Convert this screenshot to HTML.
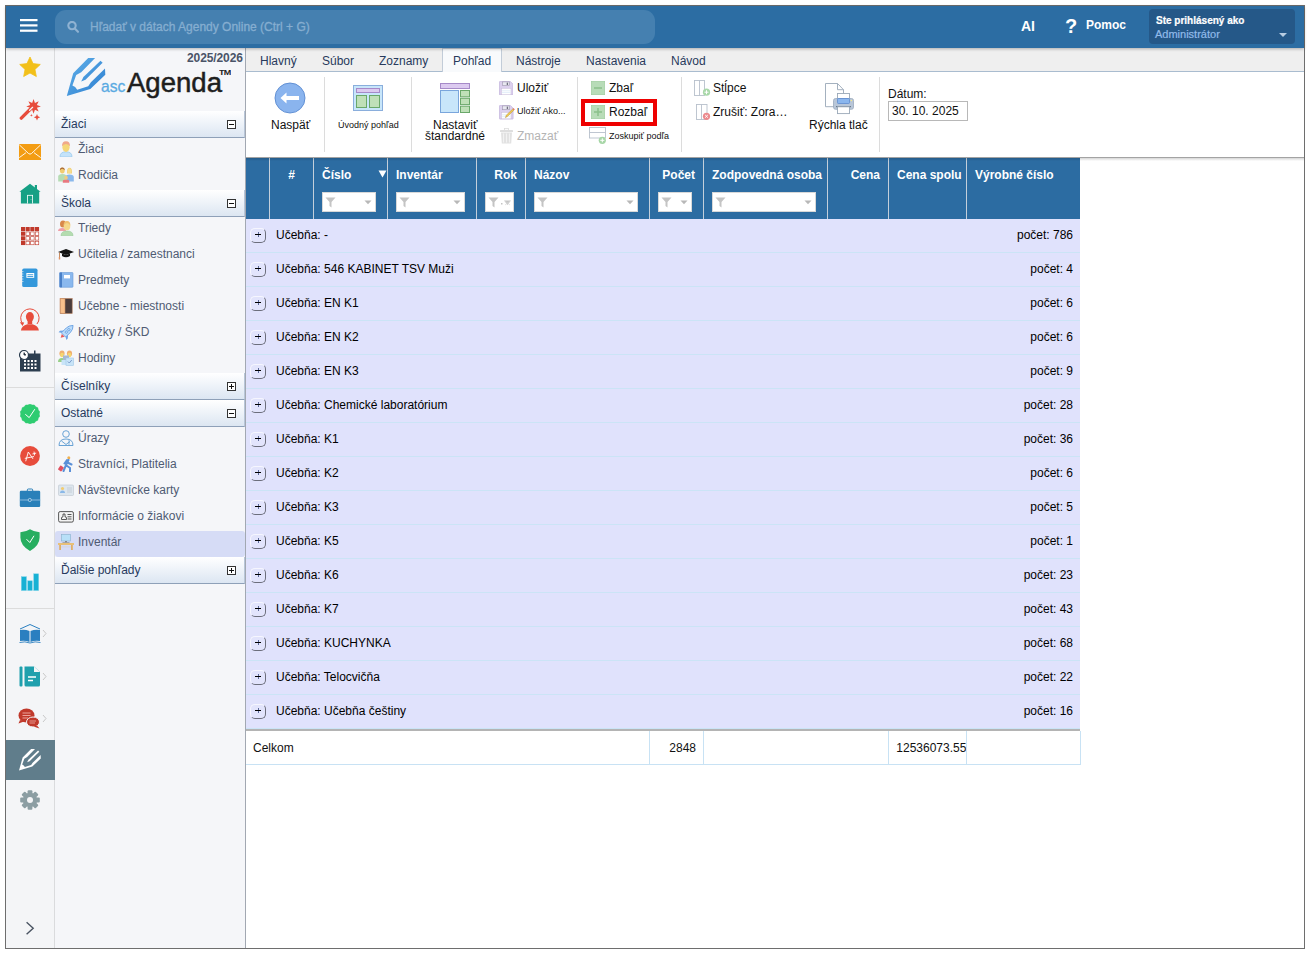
<!DOCTYPE html>
<html><head><meta charset="utf-8">
<style>
*{box-sizing:border-box;margin:0;padding:0}
html,body{width:1310px;height:954px;background:#fff;overflow:hidden;font-family:"Liberation Sans",sans-serif;font-size:12px;color:#222;position:relative}
.a{position:absolute;white-space:nowrap}
.hz{z-index:6}
#frame{position:absolute;left:5px;top:5px;width:1300px;height:944px;border:1px solid #6e6e6e}
#hdr{position:absolute;left:6px;top:6px;width:1298px;height:42px;background:#2c6da3;box-shadow:0 1px 3px rgba(0,0,0,.28);z-index:5}
#search{position:absolute;left:55px;top:10px;width:600px;height:34px;border-radius:11px;background:#4580b0;z-index:6}
#leftbar{position:absolute;left:6px;top:48px;width:49px;height:900px;background:#f4f5f7;border-right:1px solid #dadbdd}
#nav{position:absolute;left:55px;top:48px;width:191px;height:900px;background:#f5f6f9;border-right:1px solid #a2a8b2}
.sh{position:absolute;left:55px;width:190px;height:27px;background:linear-gradient(#ffffff,#dce6f2);border-bottom:1px solid #8ea0b8;border-right:1px solid #b8c6d8}
.sh span{position:absolute;left:6px;top:6px;font-size:12px;color:#273a5e}
.sh i{position:absolute;left:172px;top:9px;width:9px;height:9px;border:1px solid #333;background:#fff}
.sh i:before{content:"";position:absolute;left:1px;top:3px;width:5px;height:1px;background:#111}
.sh i.p:after{content:"";position:absolute;left:3px;top:1px;width:1px;height:5px;background:#111}
.ni{position:absolute;left:55px;width:190px;height:26px}
.ni span{position:absolute;left:23px;top:4px;font-size:12px;color:#4f5b73}
.ni svg{position:absolute;left:3px;top:3px}
.lb{position:absolute;left:19px}
#tabs{position:absolute;left:246px;top:48px;width:1058px;height:24px;background:#efefef;border-bottom:1px solid #a9bccf}
.tab{position:absolute;top:6px;font-size:12px;color:#283a5c}
#ribbon{position:absolute;left:246px;top:72px;width:1058px;height:86px;background:#fff}
.sep{position:absolute;top:77px;width:1px;height:75px;background:#dcdcdc}
#grid{position:absolute;left:246px;top:158px}
.gh{position:absolute;top:158px;height:61px;background:#2c6da2}
.gs{position:absolute;top:158px;width:1px;height:61px;background:#c9d3dd}
.ght{position:absolute;top:168px;font-size:12px;font-weight:bold;color:#fff}
.flt{position:absolute;top:192px;height:20px;background:#fff;border:1px solid #d8d8d8}
.flt svg.f{position:absolute;left:2px;top:4px}
.flt svg.d{position:absolute;right:3px;top:7px}
.row{position:absolute;left:246px;width:834px;height:34px;background:#e0e2fc;border-bottom:1px solid #cbe4f6}
.row .pb{position:absolute;left:4px;top:9px;width:16px;height:15px;border-radius:5px;background:#e2e4fc;border:1px solid #f6f6fe;border-right-color:#6c6e7c;border-bottom-color:#6c6e7c}
.row .pb:before{content:"";position:absolute;left:4px;top:5px;width:6px;height:1px;background:#000;z-index:1}
.row .pb:after{content:"";position:absolute;left:6.5px;top:3px;width:1px;height:5px;background:#5a6898}
.row span{position:absolute;left:30px;top:9px;font-size:12px;color:#000}
.row b{position:absolute;right:7px;top:9px;font-size:12px;font-weight:normal;color:#000}
</style></head><body>
<div id="frame"></div>
<div id="hdr"></div>
<svg class="a hz" style="left:19.5px;top:19px" width="18" height="14" viewBox="0 0 18 14"><rect x="0" y="0" width="17.5" height="2.2" fill="#fff"/><rect x="0" y="5.3" width="17.5" height="2.2" fill="#fff"/><rect x="0" y="10.6" width="17.5" height="2.2" fill="#fff"/></svg>
<div id="search"></div>
<svg class="a hz" style="left:67px;top:21px" width="13" height="13" viewBox="0 0 13 13"><circle cx="5" cy="4.6" r="3.7" fill="none" stroke="#8fb2d2" stroke-width="2.1"/><line x1="7.8" y1="7.5" x2="11" y2="10.8" stroke="#8fb2d2" stroke-width="2.1" stroke-linecap="round"/></svg>
<div class="a hz" style="left:90px;top:20px;font-size:12px;color:#86aed0;-webkit-text-stroke:0.3px #86aed0">Hľadať v dátach Agendy Online (Ctrl + G)</div>
<div class="a hz" style="left:1021px;top:18px;font-size:14px;font-weight:bold;color:#fff">AI</div>
<div class="a hz" style="left:1065px;top:15px;font-size:20px;font-weight:bold;color:#fff">?</div>
<div class="a hz" style="left:1086px;top:18px;font-size:12px;font-weight:bold;color:#fff">Pomoc</div>
<div class="a hz" style="left:1149px;top:9px;width:146px;height:35px;border-radius:4px;background:#255888"></div>
<div class="a hz" style="left:1156px;top:14.5px;font-size:10px;font-weight:bold;color:#fff;-webkit-text-stroke:0.2px #fff">Ste prihlásený ako</div>
<div class="a hz" style="left:1155px;top:28px;font-size:11px;color:#92bbea;-webkit-text-stroke:0.2px #92bbea">Administrátor</div>
<svg class="a hz" style="left:1279px;top:33px" width="8" height="5"><path d="M0 0H8L4 4Z" fill="#b8cde2"/></svg>

<div id="leftbar"></div>
<div id="nav"></div>


<!-- LEFT BAR ICONS -->
<svg class="a" style="left:19px;top:56px" width="22" height="22" viewBox="0 0 22 22"><path d="M11.00 1.00 L14.06 7.59 L21.27 8.46 L15.95 13.41 L17.35 20.54 L11.00 17.00 L4.65 20.54 L6.05 13.41 L0.73 8.46 L7.94 7.59 Z" fill="#f2c01a" stroke="#f2c01a" stroke-width="0.8" stroke-linejoin="round"/></svg>
<svg class="a" style="left:19px;top:99px" width="24" height="24" viewBox="0 0 24 24"><path d="M14.55 0.10 L15.93 4.07 L19.71 2.24 L17.88 6.02 L21.85 7.40 L17.88 8.78 L19.71 12.56 L15.93 10.73 L14.55 14.70 L13.17 10.73 L9.39 12.56 L11.22 8.78 L7.25 7.40 L11.22 6.02 L9.39 2.24 L13.17 4.07Z" fill="#e74c3c"/><path d="M2.3 19.2 L12.5 9" stroke="#e74c3c" stroke-width="3.3" stroke-linecap="round"/><path d="M10.6 11.3 L13.6 8.3" stroke="#f4f5f7" stroke-width="1.25" stroke-linecap="round"/><path d="M18.00 15.00 L18.95 17.25 L21.20 18.20 L18.95 19.15 L18.00 21.40 L17.05 19.15 L14.80 18.20 L17.05 17.25Z" fill="#e74c3c"/><path d="M12.40 14.80 L12.75 15.95 L13.90 16.30 L12.75 16.65 L12.40 17.80 L12.05 16.65 L10.90 16.30 L12.05 15.95Z" fill="#e74c3c"/></svg>
<svg class="a" style="left:18px;top:143px" width="24" height="18" viewBox="0 0 24 18"><rect x="1" y="1" width="22" height="16" fill="#f39c12"/><path d="M1.3 1.8 L10.5 10.5 Q12 11.8 13.5 10.5 L22.7 1.8" stroke="#fff" stroke-width="0.9" fill="none"/><path d="M1.3 14.6 L8 9.7 M22.7 14.6 L16 9.7" stroke="#fff" stroke-width="0.9"/></svg>
<svg class="a" style="left:19px;top:183px" width="22" height="21" viewBox="0 0 22 21"><path d="M11 0.8 L21.6 8.8 L20.2 8.8 L20.2 20.5 L1.9 20.5 L1.9 8.8 L0.4 8.8 Z" fill="#16a085"/><rect x="15.8" y="2" width="2.2" height="5" fill="#16a085"/><rect x="8.1" y="11.9" width="5.9" height="8.6" fill="#fff"/><rect x="8.9" y="12.7" width="4.3" height="7.8" fill="#16a085"/><circle cx="12" cy="16.5" r="0.4" fill="#c8ece4"/></svg>
<svg class="a" style="left:20.5px;top:226.5px" width="19" height="19" viewBox="0 0 19 19"><rect x="0.00" y="0.00" width="4.1" height="4.1" fill="#c0392b"/><rect x="4.65" y="0.00" width="4.1" height="4.1" fill="#c0392b"/><rect x="9.30" y="0.00" width="4.1" height="4.1" fill="#c0392b"/><rect x="13.95" y="0.00" width="4.1" height="4.1" fill="#c0392b"/><rect x="0.00" y="4.65" width="4.1" height="4.1" fill="#c0392b"/><rect x="4.65" y="4.65" width="4.1" height="4.1" fill="#c0392b"/><rect x="5.25" y="5.25" width="2.9" height="2.9" fill="#fff"/><rect x="9.30" y="4.65" width="4.1" height="4.1" fill="#c0392b"/><rect x="9.90" y="5.25" width="2.9" height="2.9" fill="#fff"/><rect x="13.95" y="4.65" width="4.1" height="4.1" fill="#c0392b"/><rect x="14.55" y="5.25" width="2.9" height="2.9" fill="#fff"/><rect x="0.00" y="9.30" width="4.1" height="4.1" fill="#c0392b"/><rect x="4.65" y="9.30" width="4.1" height="4.1" fill="#c0392b"/><rect x="5.25" y="9.90" width="2.9" height="2.9" fill="#fff"/><rect x="9.30" y="9.30" width="4.1" height="4.1" fill="#c0392b"/><rect x="9.90" y="9.90" width="2.9" height="2.9" fill="#fff"/><rect x="13.95" y="9.30" width="4.1" height="4.1" fill="#c0392b"/><rect x="14.55" y="9.90" width="2.9" height="2.9" fill="#fff"/><rect x="0.00" y="13.95" width="4.1" height="4.1" fill="#c0392b"/><rect x="4.65" y="13.95" width="4.1" height="4.1" fill="#c0392b"/><rect x="5.25" y="14.55" width="2.9" height="2.9" fill="#fff"/><rect x="9.30" y="13.95" width="4.1" height="4.1" fill="#c0392b"/><rect x="9.90" y="14.55" width="2.9" height="2.9" fill="#fff"/><rect x="13.95" y="13.95" width="4.1" height="4.1" fill="#c0392b"/><rect x="14.55" y="14.55" width="2.9" height="2.9" fill="#fff"/></svg>
<svg class="a" style="left:21px;top:268px" width="18" height="20" viewBox="0 0 18 20"><rect x="1.2" y="0.6" width="15.3" height="18.4" rx="1.6" fill="#3498db"/><path d="M0.5 3.5H2.5M0.5 6H2.5M0.5 8.5H2.5M0.5 11H2.5M0.5 13.5H2.5" stroke="#f4f5f7" stroke-width="0.6"/><rect x="5.4" y="5" width="7.8" height="4.8" fill="#fff"/><rect x="6.4" y="6.3" width="5.8" height="0.9" fill="#3498db"/><rect x="6.4" y="8" width="5.8" height="0.9" fill="#3498db"/></svg>
<svg class="a" style="left:19px;top:308px" width="22" height="24" viewBox="0 0 22 24"><path d="M3.85 16 A9.2 9.2 0 1 1 17.95 16" stroke="#e74c3c" stroke-width="1" fill="none"/><path d="M0.8 14.2 L5.2 14.6 L3.6 18Z" fill="#e74c3c"/><ellipse cx="10.9" cy="8.8" rx="4" ry="4.8" fill="#e74c3c"/><rect x="8.6" y="12" width="4.6" height="4" fill="#e74c3c"/><path d="M1.9 22.6 Q2.6 17.6 8.3 16.3 L13.5 16.3 Q19.2 17.6 19.9 22.6 Z" fill="#e74c3c"/></svg>
<svg class="a" style="left:19px;top:350px" width="22" height="22" viewBox="0 0 22 22"><rect x="1" y="3.5" width="20.5" height="18" fill="#2c3e50"/><g fill="#fff"><rect x="5" y="10" width="2" height="2"/><rect x="8.5" y="10" width="2" height="2"/><rect x="12" y="10" width="2" height="2"/><rect x="15.5" y="10" width="2" height="2"/><rect x="5" y="13.5" width="2" height="2"/><rect x="8.5" y="13.5" width="2" height="2"/><rect x="12" y="13.5" width="2" height="2"/><rect x="15.5" y="13.5" width="2" height="2"/><rect x="5" y="17" width="2" height="2"/><rect x="8.5" y="17" width="2" height="2"/><rect x="12" y="17" width="2" height="2"/><rect x="15.5" y="17" width="2" height="2"/></g><rect x="15" y="0.5" width="1.5" height="4" fill="#2c3e50"/><circle cx="5" cy="5" r="4.5" fill="#fff" stroke="#2c3e50" stroke-width="1.2"/><path d="M5 2.5V5H7" stroke="#2c3e50" stroke-width="1"/></svg>
<div class="a" style="left:6px;top:387px;width:48px;height:1px;background:#dcdcdc"></div>
<svg class="a" style="left:20px;top:404px" width="20" height="20" viewBox="0 0 20 20"><path d="M10.00 0.00 L12.05 1.03 L14.34 0.99 L15.74 2.81 L17.82 3.77 L18.29 6.01 L19.75 7.77 L19.20 10.00 L19.75 12.23 L18.29 13.99 L17.82 16.23 L15.74 17.19 L14.34 19.01 L12.05 18.97 L10.00 20.00 L7.95 18.97 L5.66 19.01 L4.26 17.19 L2.18 16.23 L1.71 13.99 L0.25 12.23 L0.80 10.00 L0.25 7.77 L1.71 6.01 L2.18 3.77 L4.26 2.81 L5.66 0.99 L7.95 1.03Z" fill="#2ecc71" stroke="#2ecc71" stroke-width="0.5" stroke-linejoin="round"/><path d="M5.3 10.3 L9.2 13.6 L14.8 5.2" stroke="#fff" stroke-width="1" fill="none"/></svg>
<svg class="a" style="left:20px;top:446px" width="20" height="20" viewBox="0 0 20 20"><circle cx="10" cy="10" r="9.9" fill="#e74c3c"/><path d="M5.8 14.9 L8.3 6 L12.8 12.6 M5.2 12.3 L13.6 10.6 M12.8 7.9 L15.8 7.2 M14.1 6 L14.5 9" stroke="#fff" stroke-width="0.9" fill="none" stroke-linecap="round"/></svg>
<svg class="a" style="left:19px;top:488px" width="22" height="20" viewBox="0 0 22 20"><rect x="8.3" y="1" width="5.4" height="3" rx="1" fill="none" stroke="#2a80b9" stroke-width="1"/><rect x="0.8" y="2.8" width="20.4" height="16.1" rx="1.2" fill="#2a80b9"/><path d="M0.8 12H21.2" stroke="#8ab8dc" stroke-width="1"/><circle cx="10.8" cy="12" r="1.6" fill="#2a80b9" stroke="#b8d4ea" stroke-width="0.8"/></svg>
<svg class="a" style="left:20px;top:529px" width="20" height="22" viewBox="0 0 20 22"><path d="M10 0.2 Q14 2.8 19.6 3.2 L19.6 8.5 Q19.6 16.5 10 22 Q0.4 16.5 0.4 8.5 L0.4 3.2 Q6 2.8 10 0.2 Z" fill="#27ae60"/><path d="M6.5 10.2 L9.8 13.5 L14 6.8" stroke="#fff" stroke-width="1" fill="none"/></svg>
<svg class="a" style="left:21px;top:573px" width="18" height="18" viewBox="0 0 18 18"><rect x="0.3" y="3.7" width="5.2" height="13.9" fill="#17b1d4" stroke="#7fd4ea" stroke-width="0.5"/><rect x="6.7" y="7.8" width="4.6" height="9.8" fill="#17b1d4" stroke="#7fd4ea" stroke-width="0.5"/><rect x="12.7" y="0.8" width="5" height="16.8" fill="#17b1d4" stroke="#7fd4ea" stroke-width="0.5"/></svg>
<div class="a" style="left:6px;top:608px;width:48px;height:1px;background:#dcdcdc"></div>
<svg class="a" style="left:19px;top:624px" width="30" height="20" viewBox="0 0 30 20"><path d="M1 5 L11 0.5 L21 5" stroke="#2a7fc0" stroke-width="1" fill="none"/><path d="M1 6 Q6 5 10.5 7 L10.5 18 Q6 16 1 17 Z" fill="#2a7fc0"/><path d="M11.5 7 Q16 5 21 6 L21 17 Q16 16 11.5 18 Z" fill="#2a7fc0"/><path d="M0.5 18.5 Q6 17 11 19 Q16 17 21.5 18.5" stroke="#2a7fc0" stroke-width="0.9" fill="none"/><path d="M24 6 L27 9.5 L24 13" stroke="#c8c8c8" stroke-width="1" fill="none"/></svg>
<svg class="a" style="left:19px;top:666px" width="30" height="21" viewBox="0 0 30 21"><rect x="0.5" y="0.5" width="3" height="20" rx="1" fill="#1fa0ad"/><path d="M5.5 0.5 L15 0.5 L21 6 L21 19 Q21 20.5 19.5 20.5 L7 20.5 Q5.5 20.5 5.5 19 Z" fill="#1fa0ad"/><path d="M15 0.5 L15 6 L21 6 Z" fill="#f4f5f7"/><path d="M9 11H17M9 14.5H14" stroke="#fff" stroke-width="1.5"/><path d="M24 7 L27 10.5 L24 14" stroke="#c8c8c8" stroke-width="1" fill="none"/></svg>
<svg class="a" style="left:18px;top:708px" width="31" height="21" viewBox="0 0 31 21"><ellipse cx="8.5" cy="7.5" rx="8" ry="7" fill="#c0392b"/><path d="M2 12 L0.5 15.5 L6 13.5Z" fill="#c0392b"/><path d="M4.5 5H12.5M4.5 7.5H12.5M4.5 10H10" stroke="#f0b0a8" stroke-width="0.9"/><ellipse cx="15" cy="14" rx="6.5" ry="5" fill="#c0392b" stroke="#f4f5f7" stroke-width="1"/><path d="M19 17.5 L21.5 20.5 L15.5 18.5Z" fill="#c0392b"/><path d="M11.5 13H18M11.5 15H17" stroke="#f0b0a8" stroke-width="0.8"/><path d="M25 7 L28 10.5 L25 14" stroke="#c8c8c8" stroke-width="1" fill="none"/></svg>
<div class="a" style="left:6px;top:740px;width:49px;height:40px;background:#607d8b"></div>
<svg class="a" style="left:19px;top:749px" width="23" height="22" viewBox="0 0 23 22"><g transform="scale(0.566) translate(-4.8,-4)"><path d="M26.2,4 L33.1,4 L19.2,18.2 L14.2,21.1 L10.4,31.5 Q13.5,32.5 15.2,35.8 L26.2,32.3 L28.9,28.3 L43,14.4 L43.3,20.8 L28.3,35 L4.8,42 L11.2,19.2 Z" fill="#fff"/><path d="M38.5,6.7 L40.6,8.8 L23.5,25.7 L19.2,27.5 L21.4,23 Z" fill="#fff"/></g></svg>
<svg class="a" style="left:20px;top:790px" width="20" height="20" viewBox="0 0 20 20"><g fill="#8c9ea3"><circle cx="10" cy="10" r="7.2"/><rect x="7.6" y="0.2" width="4.8" height="5" rx="1" transform="rotate(0 10 10)"/><rect x="7.6" y="0.2" width="4.8" height="5" rx="1" transform="rotate(45 10 10)"/><rect x="7.6" y="0.2" width="4.8" height="5" rx="1" transform="rotate(90 10 10)"/><rect x="7.6" y="0.2" width="4.8" height="5" rx="1" transform="rotate(135 10 10)"/><rect x="7.6" y="0.2" width="4.8" height="5" rx="1" transform="rotate(180 10 10)"/><rect x="7.6" y="0.2" width="4.8" height="5" rx="1" transform="rotate(225 10 10)"/><rect x="7.6" y="0.2" width="4.8" height="5" rx="1" transform="rotate(270 10 10)"/><rect x="7.6" y="0.2" width="4.8" height="5" rx="1" transform="rotate(315 10 10)"/></g><circle cx="10" cy="10" r="3" fill="#f4f5f7"/></svg>
<svg class="a" style="left:24px;top:921px" width="12" height="15" viewBox="0 0 12 15"><path d="M2.6 1.3 L9.2 7.3 L2.6 13.3" stroke="#4a5462" stroke-width="1.4" fill="none"/></svg>
<!-- NAV -->
<div class="a" style="left:187px;top:51px;font-size:12px;font-weight:bold;color:#4a5468;letter-spacing:-0.1px">2025/2026</div>
<svg class="a" style="left:62px;top:54px" width="50" height="46" viewBox="0 0 50 46">
 <defs><linearGradient id="lg" x1="0" y1="0" x2="1" y2="1"><stop offset="0" stop-color="#62b2ea"/><stop offset="1" stop-color="#2a7ccf"/></linearGradient></defs>
 <path d="M26.2,4 L33.1,4 L19.2,18.2 L14.2,21.1 L10.4,31.5 Q13.5,32.5 15.2,35.8 L26.2,32.3 L28.9,28.3 L43,14.4 L43.3,20.8 L28.3,35 L4.8,42 L11.2,19.2 Z" fill="url(#lg)"/>
 <path d="M38.5,6.7 L40.6,8.8 L23.5,25.7 L19.2,27.5 L21.4,23 Z" fill="url(#lg)"/>
</svg>
<div class="a" style="left:101px;top:76.5px;font-size:17px;color:#5aaae2;-webkit-text-stroke:0.3px #5aaae2;transform:scaleX(0.92);transform-origin:0 0">asc</div>
<div class="a" style="left:127px;top:67.5px;font-size:27px;color:#1e1e1e;-webkit-text-stroke:0.5px #1e1e1e;transform:scaleX(1.02);transform-origin:0 0">Agenda</div>
<div class="a" style="left:219px;top:68px;font-size:9px;font-weight:bold;color:#222;letter-spacing:-0.8px;transform:scaleY(0.85);transform-origin:0 0">TM</div>

<div class="sh" style="top:111px"><span>Žiaci</span><i></i></div>
<div class="ni" style="top:138px"><svg width="16" height="16" viewBox="0 0 16 16"><path d="M2 15.8 Q2 10.8 8 10.8 Q14 10.8 14 15.8 Z" fill="#c4e3fa" stroke="#9ccaee" stroke-width="0.8"/><ellipse cx="8" cy="6.3" rx="3.6" ry="4.6" fill="#f5d778"/><path d="M4 5.5 Q3.8 0.3 8 0.3 Q12.2 0.3 12 5.5 Q11 3 8 3 Q5 3 4 5.5Z" fill="#f0a88a"/></svg><span>Žiaci</span></div>
<div class="ni" style="top:164px"><svg width="16" height="16" viewBox="0 0 16 16"><path d="M0.2 14.5 L0.2 9.5 Q0.2 7 4.5 7 Q8.5 7 8.5 9.5 L8.5 14.5Z" fill="#b6dcb4"/><ellipse cx="4.3" cy="3.6" rx="2.4" ry="3" fill="#f2cc70"/><path d="M1.9 3.3 Q1.9 0.5 4.3 0.5 Q6.7 0.5 6.7 3.3 Q5.5 1.8 4.3 1.8 Q3 1.8 1.9 3.3Z" fill="#a86838"/><path d="M7.5 14.5 L7.5 10 Q7.5 7.5 11.5 7.5 Q15.8 7.5 15.8 10 L15.8 14.5Z" fill="#8ab8ec"/><path d="M9 6.5 Q8.5 0.8 11.5 0.8 Q14.5 0.8 14 6.5Z" fill="#f0d080"/><ellipse cx="11.5" cy="4" rx="2" ry="2.6" fill="#f5dc8a"/><path d="M4.8 15.8 L4.8 14 Q4.8 12.5 8 12.5 Q11.2 12.5 11.2 14 L11.2 15.8Z" fill="#e87880"/><ellipse cx="8" cy="10.7" rx="1.8" ry="2" fill="#f2cc80"/></svg><span>Rodičia</span></div>

<div class="sh" style="top:190px"><span>Škola</span><i></i></div>
<div class="ni" style="top:217px"><svg width="16" height="16" viewBox="0 0 16 16"><path d="M0 11 Q0 8 4.5 8 Q8 8 8 11Z" fill="#f0a0a8"/><ellipse cx="5" cy="4" rx="3" ry="3.6" fill="#d8884a"/><path d="M3 15.8 Q3 11 9 11 Q15 11 15 15.8Z" fill="#b4dcb0" stroke="#98c898" stroke-width="0.6"/><ellipse cx="9" cy="6" rx="3.3" ry="4.3" fill="#f5d88a"/><path d="M5.7 5.5 Q5.5 1 9 1 Q12.5 1 12.3 5.5 Q11 3 9 3 Q7 3 5.7 5.5Z" fill="#f0c070"/></svg><span>Triedy</span></div>
<div class="ni" style="top:243px"><svg width="16" height="16" viewBox="0 0 16 16"><path d="M0 6 L8 3 L16 6 L8 9 Z" fill="#111"/><path d="M4 7.5 L4 10 Q8 12.5 12 10 L12 7.5 L8 9Z" fill="#111"/><path d="M1.5 6.5 L1.5 12" stroke="#c08050" stroke-width="0.9"/><rect x="0.8" y="11" width="1.4" height="2.5" fill="#e09060"/></svg><span>Učitelia / zamestnanci</span></div>
<div class="ni" style="top:269px"><svg width="16" height="16" viewBox="0 0 16 16"><rect x="1.6" y="0.5" width="13.4" height="14.8" rx="0.8" fill="#8ab8ee" stroke="#6a9ad6" stroke-width="0.6"/><rect x="1.6" y="0.5" width="2.4" height="14.8" fill="#4a80c8"/><rect x="6" y="3" width="6" height="3.4" fill="#fff"/></svg><span>Predmety</span></div>
<div class="ni" style="top:295px"><svg width="16" height="16" viewBox="0 0 16 16"><rect x="2.2" y="0.5" width="12" height="15" fill="#4a3c3c" stroke="#b88060" stroke-width="0.6"/><path d="M2.2 0.3 L7 0.8 L7 15.5 L2.2 15.3Z" fill="#f8c08c" stroke="#c88a60" stroke-width="0.6"/></svg><span>Učebne - miestnosti</span></div>
<div class="ni" style="top:321px"><svg width="16" height="16" viewBox="0 0 16 16"><g transform="rotate(45 8 8.5)"><path d="M8 -1.5 Q11 1.5 11 5 L11 12 L5 12 L5 5 Q5 1.5 8 -1.5Z" fill="#bcdcfa" stroke="#5e9ae0" stroke-width="0.8"/><path d="M5 8.5 L2.5 11.5 L2.5 13.5 L5 12Z M11 8.5 L13.5 11.5 L13.5 13.5 L11 12Z" fill="#6ea4e6"/><circle cx="8" cy="4.5" r="1.2" fill="none" stroke="#5e9ae0" stroke-width="0.7"/><circle cx="8" cy="8" r="1.2" fill="none" stroke="#5e9ae0" stroke-width="0.7"/><path d="M6 12.5 L10 12.5 L8 16Z" fill="#e85a5a"/></g></svg><span>Krúžky / ŠKD</span></div>
<div class="ni" style="top:347px"><svg width="16" height="16" viewBox="0 0 16 16"><ellipse cx="4" cy="3.5" rx="2.6" ry="3" fill="#f0b070"/><ellipse cx="11.5" cy="3.5" rx="2.6" ry="3" fill="#f0b070"/><path d="M0 12 Q0 8 4 8 Q7 8 7 12Z" fill="#98d088"/><ellipse cx="4" cy="5" rx="1.8" ry="2.2" fill="#f5d870"/><ellipse cx="11.5" cy="5" rx="1.8" ry="2.2" fill="#f5d870"/><rect x="5" y="5.5" width="6" height="5" fill="#a8b8d0"/><rect x="3.5" y="10" width="6" height="5" fill="#c8e4f8"/><rect x="8" y="8" width="7.5" height="7.5" fill="#c8e4f8" stroke="#a0c8e8" stroke-width="0.6"/><path d="M9.8 11.5 L11.3 13 L13.8 10" stroke="#6a8ac0" stroke-width="0.8" fill="none"/></svg><span>Hodiny</span></div>

<div class="sh" style="top:373px"><span>Číselníky</span><i class="p"></i></div>
<div class="sh" style="top:400px"><span>Ostatné</span><i></i></div>
<div class="ni" style="top:427px"><svg width="16" height="16" viewBox="0 0 16 16"><circle cx="8" cy="4" r="3.3" fill="none" stroke="#5a9ad0" stroke-width="0.9"/><path d="M1 15.5 Q1 9 8 9 Q15 9 15 15.5 Z" fill="none" stroke="#5a9ad0" stroke-width="0.9"/><path d="M3.5 11 L8 14.5 L12 11.5" fill="none" stroke="#5a9ad0" stroke-width="0.9"/><path d="M11 9.5 L11 15.5" stroke="#5a9ad0" stroke-width="0.7"/></svg><span>Úrazy</span></div>
<div class="ni" style="top:453px"><svg width="16" height="16" viewBox="0 0 16 16"><circle cx="10.8" cy="1.7" r="1.5" fill="#f0b050"/><path d="M10.5 4 L8 9 L5.5 15 M9.5 6.5 L13.5 8.5 M9 4 L6.5 7.5 M8.5 9.5 L12 12 L12 15.5" stroke="#5a90d8" stroke-width="2" fill="none" stroke-linecap="round"/><rect x="0.8" y="10" width="4.2" height="5" rx="0.8" fill="#e05060" transform="rotate(35 3 12.5)"/></svg><span>Stravníci, Platitelia</span></div>
<div class="ni" style="top:479px"><svg width="16" height="16" viewBox="0 0 16 16"><rect x="0.5" y="3" width="15" height="10.5" rx="1" fill="#dde6ee" stroke="#c4ccd4" stroke-width="0.7"/><circle cx="4.5" cy="6.5" r="1.6" fill="#f2cc70"/><path d="M2 11 Q2 8.5 4.5 8.5 Q7 8.5 7 11Z" fill="#8ab8e8"/><path d="M9 6H14M9 8H14M9 10H14" stroke="#c0c8d0" stroke-width="0.8"/></svg><span>Návštevnícke karty</span></div>
<div class="ni" style="top:505px"><svg width="16" height="16" viewBox="0 0 16 16"><rect x="0.6" y="3.6" width="14.8" height="10.5" rx="1.5" fill="#f4f4f4" stroke="#444" stroke-width="0.9"/><path d="M3.5 11.5 L3.5 10 Q3.5 8.8 5 8.8 L5 6 L7 6 L7 8.8 Q8.5 8.8 8.5 10 L8.5 11.5Z" fill="none" stroke="#333" stroke-width="0.8"/><path d="M9.5 6.5H13.5M9.5 8.8H13.5M9.5 11H13.5" stroke="#444" stroke-width="0.9"/></svg><span>Informácie o žiakovi</span></div>
<div class="ni" style="top:531px;background:#d6dcf6;border-radius:3px"><svg width="16" height="16" viewBox="0 0 16 16"><rect x="3.5" y="0.5" width="9" height="6.5" fill="#b8e0f8" stroke="#88b0cc" stroke-width="0.6"/><rect x="7" y="7" width="2" height="1.5" fill="#888"/><rect x="4.5" y="8" width="7" height="0.8" fill="#999"/><rect x="0" y="9" width="16" height="2" fill="#e8c078"/><rect x="1.2" y="11" width="1.8" height="5" fill="#e0b068"/><rect x="13" y="11" width="1.8" height="5" fill="#e0b068"/><rect x="3" y="12.5" width="10" height="0.8" fill="#d4d4d4"/></svg><span>Inventár</span></div>
<div class="sh" style="top:557px"><span>Ďalšie pohľady</span><i class="p"></i></div>
<div id="tabs"></div>
<div id="ribbon"></div>

<!-- TABS -->
<div class="a" style="left:442px;top:48px;width:60px;height:24px;background:#f8fafc;border:1px solid #c2ccd8;border-bottom:none"></div>
<div class="tab a" style="left:260px;top:54px">Hlavný</div>
<div class="tab a" style="left:322px;top:54px">Súbor</div>
<div class="tab a" style="left:379px;top:54px">Zoznamy</div>
<div class="tab a" style="left:453px;top:54px">Pohľad</div>
<div class="tab a" style="left:516px;top:54px">Nástroje</div>
<div class="tab a" style="left:586px;top:54px">Nastavenia</div>
<div class="tab a" style="left:671px;top:54px">Návod</div>

<!-- RIBBON -->
<div class="sep" style="left:324px"></div>
<div class="sep" style="left:411px"></div>
<div class="sep" style="left:577px"></div>
<div class="sep" style="left:681px"></div>
<div class="sep" style="left:879px"></div>
<svg class="a" style="left:274px;top:82px" width="32" height="32" viewBox="0 0 32 32"><circle cx="16" cy="16" r="15" fill="#8ab4ee" stroke="#5a8ad0" stroke-width="0.9"/><path d="M6.5 16 L12.5 10.5 L12.5 14 L25 14 L25 18 L12.5 18 L12.5 21.5 Z" fill="#fff"/></svg>
<div class="a" style="left:271px;top:118px;font-size:12px;color:#111">Naspäť</div>
<svg class="a" style="left:353px;top:85px" width="30" height="26" viewBox="0 0 30 26"><rect x="0.5" y="0.5" width="29" height="25" fill="#c8e6fa" stroke="#8aaedc"/><rect x="3.5" y="3.5" width="23" height="4" fill="#dccaf0" stroke="#a68ac8"/><rect x="3.5" y="10.5" width="10" height="12" fill="#bfe0b8" stroke="#6aa86a"/><rect x="16.5" y="10.5" width="10" height="12" fill="#bfe0b8" stroke="#6aa86a"/></svg>
<div class="a" style="left:338px;top:120px;font-size:9px;color:#111">Úvodný pohľad</div>
<svg class="a" style="left:439px;top:82px" width="32" height="32" viewBox="0 0 32 32"><rect x="1.5" y="1.5" width="29" height="5" fill="#dccaf0" stroke="#a68ac8"/><rect x="1.5" y="8.5" width="18" height="22" fill="#c8e6fa" stroke="#7aa6dc"/><rect x="21.5" y="8.5" width="9" height="6.3" fill="#bfe0b8" stroke="#6aa86a"/><rect x="21.5" y="16.3" width="9" height="6.3" fill="#bfe0b8" stroke="#6aa86a"/><rect x="21.5" y="24.2" width="9" height="6.3" fill="#bfe0b8" stroke="#6aa86a"/></svg>
<div class="a" style="left:433px;top:118px;font-size:12px;color:#111">Nastaviť</div>
<div class="a" style="left:425px;top:129px;font-size:12px;color:#111">štandardné</div>
<svg class="a" style="left:498.5px;top:80.5px" width="14.5" height="14.5" viewBox="0 0 16 16"><path d="M0.5 1 Q0.5 0.5 1 0.5 L12.5 0.5 L15.5 3.5 L15.5 15 Q15.5 15.5 15 15.5 L1 15.5 Q0.5 15.5 0.5 15 Z" fill="#dcd0ee" stroke="#c4b4dc" stroke-width="0.8"/><rect x="4" y="1" width="7.5" height="4.2" fill="#e8e8f0" stroke="#9890a8" stroke-width="0.6"/><rect x="8.5" y="1.8" width="1.5" height="2.6" fill="#707080"/><rect x="2.8" y="8.2" width="10.4" height="7" fill="#fff" stroke="#c8bcd8" stroke-width="0.5"/><path d="M3.3 10.8H12.7M3.3 12.8H12.7" stroke="#d8e8f6" stroke-width="0.8"/></svg>
<div class="a" style="left:517px;top:81px;font-size:12px;color:#111">Uložiť</div>
<svg class="a" style="left:498.5px;top:104.5px" width="16" height="15" viewBox="0 0 17.6 16.5"><path d="M0.5 1 Q0.5 0.5 1 0.5 L12.5 0.5 L15.5 3.5 L15.5 15 Q15.5 15.5 15 15.5 L1 15.5 Q0.5 15.5 0.5 15 Z" fill="#dcd0ee" stroke="#c4b4dc" stroke-width="0.8"/><rect x="4" y="1" width="7.5" height="4.2" fill="#e8e8f0" stroke="#9890a8" stroke-width="0.6"/><rect x="8.5" y="1.8" width="1.5" height="2.6" fill="#707080"/><rect x="2.8" y="8.2" width="10.4" height="7" fill="#fff" stroke="#c8bcd8" stroke-width="0.5"/><path d="M3.3 10.8H12.7M3.3 12.8H12.7" stroke="#d8e8f6" stroke-width="0.8"/><path d="M7 14 L8 11.2 L15.3 4.2 L16.6 5.5 L9.3 12.6 Z" fill="#f0c850" stroke="#a08030" stroke-width="0.4"/><path d="M15.3 4.2 L16.6 5.5 L17.3 4.8 L16 3.5Z" fill="#e85050"/></svg>
<div class="a" style="left:517px;top:106px;font-size:9px;color:#111">Uložiť Ako...</div>
<svg class="a" style="left:499.5px;top:128px" width="13" height="16" viewBox="0 0 13 16"><rect x="4.5" y="0.5" width="4" height="1.8" fill="none" stroke="#dcdcdc" stroke-width="0.8"/><rect x="0" y="2" width="13" height="2" rx="0.5" fill="#dedede"/><path d="M1 4.5 L1.8 15.5 L11.2 15.5 L12 4.5 Z" fill="#e2e2e2"/><path d="M3.5 5.5V14.5M6.5 5.5V14.5M9.5 5.5V14.5" stroke="#f2f2f2" stroke-width="1"/></svg>
<div class="a" style="left:517px;top:129px;font-size:12px;color:#b4b4b4">Zmazať</div>

<svg class="a" style="left:591px;top:81px" width="14" height="14" viewBox="0 0 14 14"><rect x="0.4" y="0.4" width="13.2" height="13.2" fill="#b8dcb8" stroke="#a4d0a4" stroke-width="0.8"/><rect x="3" y="6.2" width="8" height="1.6" fill="#8ec28e"/></svg>
<div class="a" style="left:609px;top:81px;font-size:12px;color:#111">Zbaľ</div>
<div class="a" style="left:581px;top:99px;width:76px;height:27px;border:4px solid #ee0000"></div>
<svg class="a" style="left:591px;top:105px" width="14" height="14" viewBox="0 0 14 14"><rect x="0.4" y="0.4" width="13.2" height="13.2" fill="#b8dcb8" stroke="#a4d0a4" stroke-width="0.8"/><rect x="3" y="6.2" width="8" height="1.6" fill="#8ec28e"/><rect x="6.2" y="3" width="1.6" height="8" fill="#8ec28e"/></svg>
<div class="a" style="left:609px;top:105px;font-size:12px;color:#111">Rozbaľ</div>
<svg class="a" style="left:589px;top:127px" width="18" height="18" viewBox="0 0 18 18"><rect x="0.5" y="0.5" width="16" height="10.5" fill="#fff" stroke="#b8c0cc" stroke-width="0.9"/><path d="M0.5 5.5H16.5" stroke="#b8c0cc" stroke-width="0.9"/><circle cx="13.3" cy="13.3" r="3.6" fill="#a6d6a6"/><path d="M11.3 13.3H15.3M13.3 11.3V15.3" stroke="#fff" stroke-width="1"/></svg>
<div class="a" style="left:609px;top:131px;font-size:9px;color:#111">Zoskupiť podľa</div>

<svg class="a" style="left:694px;top:80px" width="17" height="17" viewBox="0 0 17 17"><rect x="0.5" y="0.5" width="10" height="15" fill="#fff" stroke="#b8c0cc" stroke-width="0.9"/><path d="M5.5 0.5V15.5" stroke="#b8c0cc" stroke-width="0.9"/><circle cx="12.5" cy="12.2" r="3.6" fill="#a8d8a8"/><path d="M10.5 12.2H14.5M12.5 10.2V14.2" stroke="#fff" stroke-width="1"/></svg>
<div class="a" style="left:713px;top:81px;font-size:12px;color:#111">Stĺpce</div>
<svg class="a" style="left:696px;top:104px" width="15" height="17" viewBox="0 0 15 17"><rect x="0.5" y="0.5" width="10.5" height="15" fill="#fff" stroke="#b8c0cc" stroke-width="0.9"/><path d="M5.5 0.5V15.5" stroke="#b8c0cc" stroke-width="0.9"/><circle cx="10.5" cy="12.3" r="3.6" fill="#ec8a8e"/><path d="M9.2 11L11.8 13.6M11.8 11L9.2 13.6" stroke="#fff" stroke-width="1"/></svg>
<div class="a" style="left:713px;top:105px;font-size:12px;color:#111">Zrušiť: Zora…</div>
<svg class="a" style="left:824px;top:82px" width="32" height="33" viewBox="0 0 32 33"><path d="M1.5 1.5 L13.5 1.5 L19.5 7.7 L19.5 24.7 L1.5 24.7 Z" fill="#fff" stroke="#9aa8b8" stroke-width="0.9"/><path d="M13.5 1.5 L13.5 7.7 L19.5 7.7" fill="none" stroke="#9aa8b8" stroke-width="0.9"/><rect x="13.5" y="11.5" width="12" height="5" fill="#fff" stroke="#9aa8b8" stroke-width="0.9"/><rect x="9.5" y="16.5" width="20" height="10.8" rx="2" fill="#b8c6d8" stroke="#9aaabc" stroke-width="0.8"/><rect x="13.5" y="16.5" width="12" height="5" rx="0.8" fill="#8ab6ee" stroke="#5e8cd0" stroke-width="0.8"/><circle cx="27.3" cy="18.5" r="0.8" fill="#f8e880"/><rect x="12" y="24" width="15" height="1.2" fill="#6a7a8c"/><rect x="13.5" y="24.8" width="12" height="6.8" fill="#fff" stroke="#9aa8b8" stroke-width="0.9"/></svg>
<div class="a" style="left:809px;top:118px;font-size:12px;color:#111">Rýchla tlač</div>
<div class="a" style="left:888px;top:87px;font-size:12px;color:#111">Dátum:</div>
<div class="a" style="left:888px;top:101px;width:80px;height:20px;border:1px solid #b8b8b8;background:#fff"></div>
<div class="a" style="left:892px;top:104px;font-size:12px;color:#111">30. 10. 2025</div>
<!-- GRID -->
<div class="a" style="left:246px;top:158px;width:834px;height:61px;background:#2c6ca2"></div>
<div class="a" style="left:269px;top:158px;width:1px;height:61px;background:#c3cfdb"></div>
<div class="a" style="left:313px;top:158px;width:1px;height:61px;background:#c3cfdb"></div>
<div class="a" style="left:387px;top:158px;width:1px;height:61px;background:#c3cfdb"></div>
<div class="a" style="left:476px;top:158px;width:1px;height:61px;background:#c3cfdb"></div>
<div class="a" style="left:525px;top:158px;width:1px;height:61px;background:#c3cfdb"></div>
<div class="a" style="left:649px;top:158px;width:1px;height:61px;background:#c3cfdb"></div>
<div class="a" style="left:703px;top:158px;width:1px;height:61px;background:#c3cfdb"></div>
<div class="a" style="left:827px;top:158px;width:1px;height:61px;background:#c3cfdb"></div>
<div class="a" style="left:888px;top:158px;width:1px;height:61px;background:#c3cfdb"></div>
<div class="a" style="left:966px;top:158px;width:1px;height:61px;background:#c3cfdb"></div>
<div class="ght a" style="left:270px;width:43px;text-align:center">#</div>
<div class="ght a" style="left:322px">Číslo</div>
<div class="ght a" style="left:396px">Inventár</div>
<div class="ght a" style="left:477px;width:40px;text-align:right">Rok</div>
<div class="ght a" style="left:534px">Názov</div>
<div class="ght a" style="left:650px;width:45px;text-align:right">Počet</div>
<div class="ght a" style="left:712px">Zodpovedná osoba</div>
<div class="ght a" style="left:828px;width:52px;text-align:right">Cena</div>
<div class="ght a" style="left:897px">Cena spolu</div>
<div class="ght a" style="left:975px">Výrobné číslo</div>
<svg class="a" style="left:378px;top:170px" width="9" height="8"><path d="M0.5 0.5H8.5L4.5 7.5Z" fill="#fff"/></svg>
<div class="flt" style="left:322px;width:54px"><svg class="f" width="11" height="11" viewBox="0 0 11 11"><path d="M0.5 0.5H10.5L6.5 5V10.5L4.5 9V5Z" fill="#c4c4c4"/></svg><svg class="d" width="8" height="5" viewBox="0 0 8 5"><path d="M0.5 0.5H7.5L4 4.2Z" fill="#b8b8b8"/></svg></div>
<div class="flt" style="left:396px;width:69px"><svg class="f" width="11" height="11" viewBox="0 0 11 11"><path d="M0.5 0.5H10.5L6.5 5V10.5L4.5 9V5Z" fill="#c4c4c4"/></svg><svg class="d" width="8" height="5" viewBox="0 0 8 5"><path d="M0.5 0.5H7.5L4 4.2Z" fill="#b8b8b8"/></svg></div>
<div class="flt" style="left:534px;width:104px"><svg class="f" width="11" height="11" viewBox="0 0 11 11"><path d="M0.5 0.5H10.5L6.5 5V10.5L4.5 9V5Z" fill="#c4c4c4"/></svg><svg class="d" width="8" height="5" viewBox="0 0 8 5"><path d="M0.5 0.5H7.5L4 4.2Z" fill="#b8b8b8"/></svg></div>
<div class="flt" style="left:658px;width:34px"><svg class="f" width="11" height="11" viewBox="0 0 11 11"><path d="M0.5 0.5H10.5L6.5 5V10.5L4.5 9V5Z" fill="#c4c4c4"/></svg><svg class="d" width="8" height="5" viewBox="0 0 8 5"><path d="M0.5 0.5H7.5L4 4.2Z" fill="#b8b8b8"/></svg></div>
<div class="flt" style="left:712px;width:104px"><svg class="f" width="11" height="11" viewBox="0 0 11 11"><path d="M0.5 0.5H10.5L6.5 5V10.5L4.5 9V5Z" fill="#c4c4c4"/></svg><svg class="d" width="8" height="5" viewBox="0 0 8 5"><path d="M0.5 0.5H7.5L4 4.2Z" fill="#b8b8b8"/></svg></div>
<div class="flt" style="left:485px;width:29px"><svg class="f" width="11" height="11" viewBox="0 0 11 11"><path d="M0.5 0.5H10.5L6.5 5V10.5L4.5 9V5Z" fill="#c4c4c4"/></svg><svg style="position:absolute;left:15px;top:7px" width="10" height="6" viewBox="0 0 10 6"><rect x="0" y="3" width="1.5" height="1.5" fill="#c4c4c4"/><path d="M3 0.5H10L6.5 5Z" fill="#c4c4c4"/><path d="M4 1L9 5M9 1L4 5" stroke="#d8d8d8" stroke-width="0.7"/></svg></div>
<div class="row" style="top:219px"><i class="pb"></i><span>Učebňa: -</span><b>počet: 786</b></div>
<div class="row" style="top:253px"><i class="pb"></i><span>Učebňa: 546 KABINET TSV Muži</span><b>počet: 4</b></div>
<div class="row" style="top:287px"><i class="pb"></i><span>Učebňa: EN K1</span><b>počet: 6</b></div>
<div class="row" style="top:321px"><i class="pb"></i><span>Učebňa: EN K2</span><b>počet: 6</b></div>
<div class="row" style="top:355px"><i class="pb"></i><span>Učebňa: EN K3</span><b>počet: 9</b></div>
<div class="row" style="top:389px"><i class="pb"></i><span>Učebňa: Chemické laboratórium</span><b>počet: 28</b></div>
<div class="row" style="top:423px"><i class="pb"></i><span>Učebňa: K1</span><b>počet: 36</b></div>
<div class="row" style="top:457px"><i class="pb"></i><span>Učebňa: K2</span><b>počet: 6</b></div>
<div class="row" style="top:491px"><i class="pb"></i><span>Učebňa: K3</span><b>počet: 5</b></div>
<div class="row" style="top:525px"><i class="pb"></i><span>Učebňa: K5</span><b>počet: 1</b></div>
<div class="row" style="top:559px"><i class="pb"></i><span>Učebňa: K6</span><b>počet: 23</b></div>
<div class="row" style="top:593px"><i class="pb"></i><span>Učebňa: K7</span><b>počet: 43</b></div>
<div class="row" style="top:627px"><i class="pb"></i><span>Učebňa: KUCHYNKA</span><b>počet: 68</b></div>
<div class="row" style="top:661px"><i class="pb"></i><span>Učebňa: Telocvičňa</span><b>počet: 22</b></div>
<div class="row" style="top:695px"><i class="pb"></i><span>Učebňa: Učebňa češtiny</span><b>počet: 16</b></div>
<div class="a" style="left:246px;top:729px;width:834px;height:2px;background:#b4b4b4"></div>
<div class="a" style="left:246px;top:731px;width:835px;height:34px;background:#fff;border-bottom:1px solid #c8e2f4;border-right:1px solid #c8e2f4"></div>
<div class="a" style="left:649px;top:731px;width:1px;height:33px;background:#c8e2f4"></div>
<div class="a" style="left:703px;top:731px;width:1px;height:33px;background:#c8e2f4"></div>
<div class="a" style="left:888px;top:731px;width:1px;height:33px;background:#c8e2f4"></div>
<div class="a" style="left:966px;top:731px;width:1px;height:33px;background:#c8e2f4"></div>
<div class="a" style="left:253px;top:741px;font-size:12px;color:#111">Celkom</div>
<div class="a" style="left:650px;top:741px;width:46px;text-align:right;font-size:12px;color:#111">2848</div>
<div class="a" style="left:889px;top:741px;width:77px;overflow:hidden;font-size:12px;color:#111;padding-left:7.3px">12536073.55</div>
<div class="a" style="left:246px;top:157px;width:1058px;height:1px;background:rgba(0,0,0,.36)"></div>
<div class="a" style="left:246px;top:158px;width:1058px;height:3px;background:linear-gradient(rgba(0,0,0,.16),rgba(0,0,0,0))"></div>
</body></html>
